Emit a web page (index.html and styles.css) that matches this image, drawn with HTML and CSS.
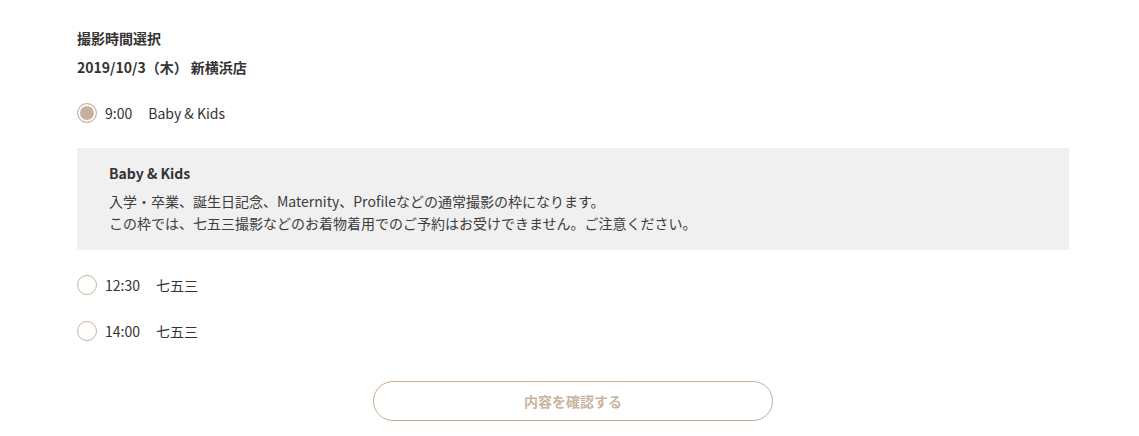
FILE: index.html
```html
<!DOCTYPE html>
<html lang="ja">
<head>
<meta charset="utf-8">
<title>撮影時間選択</title>
<link rel="stylesheet" href="styles.css">
</head>
<body>
<main class="page">
  <h2 class="title">撮影時間選択</h2>
  <p class="date">2019/10/3（木） 新横浜店</p>

  <ul class="slots">
    <li class="slot">
      <label class="slot-label">
        <span class="radio is-checked"></span>
        <span class="time">9:00</span>
        <span class="plan">Baby &amp; Kids</span>
      </label>
      <div class="note">
        <p class="note-title">Baby &amp; Kids</p>
        <p class="note-text">入学・卒業、誕生日記念、Maternity、Profileなどの通常撮影の枠になります。<br>この枠では、七五三撮影などのお着物着用でのご予約はお受けできません。ご注意ください。</p>
      </div>
    </li>
    <li class="slot">
      <label class="slot-label">
        <span class="radio"></span>
        <span class="time">12:30</span>
        <span class="plan">七五三</span>
      </label>
    </li>
    <li class="slot">
      <label class="slot-label">
        <span class="radio"></span>
        <span class="time">14:00</span>
        <span class="plan">七五三</span>
      </label>
    </li>
  </ul>

  <div class="actions">
    <button class="confirm" type="button">内容を確認する</button>
  </div>
</main>
</body>
</html>
```

FILE: styles.css
```css
* { box-sizing: border-box; }
html, body { margin: 0; padding: 0; background: #fff; }
body {
  font-family: "Noto Sans CJK JP", "Noto Sans", sans-serif;
  color: #333;
  font-size: 14px;
}
.page {
  width: 992px;
  margin-left: 77px;
  padding-top: 27px;
}
.title {
  margin: 0;
  font-size: 14px;
  font-weight: 700;
  line-height: 22px;
}
.date {
  margin: 7px 0 0;
  font-size: 14px;
  font-weight: 700;
  line-height: 22px;
}
.slots {
  list-style: none;
  margin: 24px 0 0;
  padding: 0;
  display: flex;
  flex-direction: column;
  gap: 24px;
}
.slot-label {
  display: flex;
  align-items: center;
  height: 22px;
  font-size: 14px;
}
.radio {
  width: 20px;
  height: 20px;
  border-radius: 50%;
  border: 1px solid #c9b29c;
  background: #fff;
  flex: none;
}
.radio.is-checked {
  background: #c8b19b;
  box-shadow: inset 0 0 0 2px #fff;
}
.time { margin-left: 8px; }
.plan { margin-left: 16px; }
.note {
  margin-top: 24px;
  background: #f0f0f0;
  padding: 14px 32px 16px;
}
.note-title {
  margin: 0;
  font-size: 14px;
  font-weight: 700;
  line-height: 22px;
}
.note-text {
  margin: 6px 0 0;
  font-size: 14px;
  line-height: 22px;
  color: #3c3c3c;
}
.actions {
  display: flex;
  justify-content: center;
  margin-top: 39px;
}
.confirm {
  width: 400px;
  height: 40px;
  border: 1px solid #c8ad93;
  border-radius: 20px;
  background: #fff;
  color: #c9b49f;
  font-family: inherit;
  font-size: 14px;
  font-weight: 700;
  cursor: pointer;
}
```
